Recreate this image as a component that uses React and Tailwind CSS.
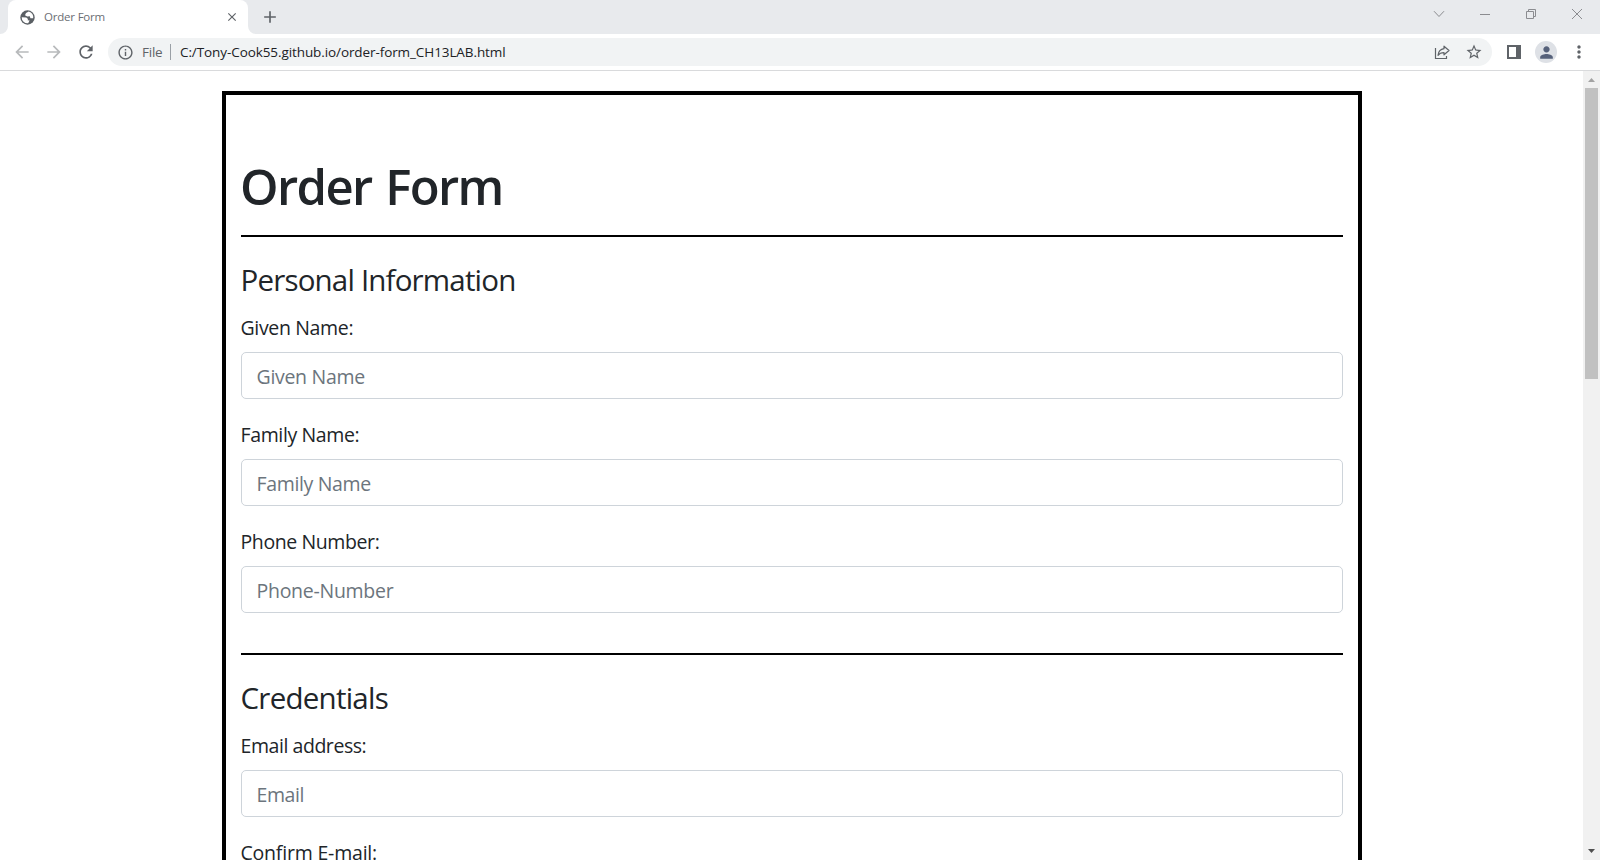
import {
  MdClose, MdAdd, MdArrowBack, MdArrowForward, MdRefresh,
  MdInfoOutline, MdStarBorder, MdPerson, MdMoreVert,
} from "react-icons/md";

function Globe() {
  return (
    <svg className="size-[17px]" viewBox="0 0 17 17">
      <circle cx="8.500" cy="8.500" r="7.200" fill="#5a5f64" />
      <path d="M9.800 2.600L7 4 6 6.200 8.300 7.400 10.800 7.200 11.400 9.200 14.200 9.300A5.800 5.800 0 0 0 9.800 2.600z" fill="#fff" />
      <path d="M2.700 8.200L7.300 8.500 9 10 8.600 11.300 10.600 11.400 9.200 14.200A5.800 5.800 0 0 1 2.700 8.200z" fill="#fff" />
    </svg>
  );
}

function TabStrip() {
  return (
    <div className="flex h-[34px] shrink-0 justify-between bg-[#e8eaed]">
      <div className="flex">
        <svg className="mt-[26px] h-2 w-2" viewBox="0 0 8 8">
          <path d="M8 0v8H0a8 8 0 0 0 8-8z" fill="#fff" />
        </svg>
        <div className="flex w-[240px] items-center rounded-t-lg bg-white pr-[9px] pl-[11px]">
          <Globe />
          <span className="ml-[8px] flex-1 text-[11.5px] tracking-[-0.2px] text-[#6b6e73]">Order Form</span>
          <MdClose className="size-[14px] text-[#5f6368]" />
        </div>
        <svg className="mt-[26px] h-2 w-2" viewBox="0 0 8 8">
          <path d="M0 0v8h8a8 8 0 0 1-8-8z" fill="#fff" />
        </svg>
        <MdAdd className="mt-[7px] ml-[4px] size-5 text-[#5f6368]" />
      </div>
      <svg className="h-[34px] w-[170px]" viewBox="1430 0 170 34" fill="none" stroke="#8b8c90">
        <path d="M1434 11.2l5 5.3 5-5.3" />
        <path d="M1480 14.5h10" />
        <path d="M1526.5 11.5h7v7h-7zM1528.5 11.5v-2h7v7h-2" />
        <path d="M1572 9l10 10M1582 9l-10 10" />
      </svg>
    </div>
  );
}

function Toolbar() {
  return (
    <div className="flex h-[37px] shrink-0 items-center border-b border-[#d9dadc] bg-white pl-3 text-[#5f6368]">
      <MdArrowBack className="size-5 text-[#b8babc]" />
      <MdArrowForward className="ml-3 size-5 text-[#b8babc]" />
      <MdRefresh className="ml-3 size-5" />
      <div className="ml-3 flex h-7 w-[1384px] items-center rounded-full bg-[#f1f3f4] pl-[9px] text-[13.5px]">
        <MdInfoOutline className="size-[17px]" />
        <span className="ml-[8px] w-[28px] tracking-[-0.25px]">File</span>
        <span className="h-4 w-px bg-[#9aa0a6]" />
        <span className="ml-[9px] flex-1 tracking-[-0.09px] text-[#202124]">
          C:/Tony-Cook55.github.io/order-form_CH13LAB.html
        </span>
        <svg className="size-4" viewBox="0 0 16 16" fill="none" stroke="#5f6368" strokeWidth="1.2">
          <path d="M1.500 4v10.500h11V12" />
          <path d="M10 2.200l5 4.300-5 4.300V8.600C7.300 8.600 5.400 9.300 4 11.300 4.400 7.800 6.400 5.200 10 4.700z" strokeLinejoin="round" />
        </svg>
        <MdStarBorder className="mr-[9px] ml-[15px] size-[18px]" />
      </div>
      <svg className="ml-[15px] size-[14px]" viewBox="0 0 14 14">
        <path d="M0 0h14v14H0zM2 2v10h7V2z" fill="#5f6368" fillRule="evenodd" />
      </svg>
      <div className="ml-[14px] flex size-[22px] items-center justify-center rounded-full bg-[#dee1e6]">
        <MdPerson className="size-[19px] text-[#56617a]" />
      </div>
      <MdMoreVert className="ml-[11.5px] size-5" />
    </div>
  );
}

function Field({ label, labelClass, placeholder, placeholderClass }) {
  return (
    <div className="mb-[21px]">
      <label className={`-ml-[0.5px] mb-[10px] block h-[29px] text-[19.5px] leading-[30px] text-[#212529] ${labelClass}`}>{label}</label>
      <input
        className={`block h-[47px] w-full rounded-[5px] border border-[#ced4da] pr-[14px] pl-[14.5px] pt-[2px] text-[19.5px] outline-none placeholder:text-[#6c757d] ${placeholderClass}`}
        placeholder={placeholder}
      />
    </div>
  );
}

function Scrollbar() {
  return (
    <div className="flex w-[17px] flex-col items-center bg-[#f1f1f1]">
      <svg className="h-[17px] w-[17px] shrink-0" viewBox="0 0 17 17">
        <path d="M5 11l3.500-4 3.500 4z" fill="#a3a3a3" />
      </svg>
      <div className="h-[291px] w-[13px] bg-[#c1c1c1]" />
      <svg className="mt-auto h-[17px] w-[17px] shrink-0" viewBox="0 0 17 17">
        <path d="M5 6l3.500 4 3.500-4z" fill="#505050" />
      </svg>
    </div>
  );
}

export default function App() {
  return (
    <div className="flex h-[860px] w-[1600px] flex-col overflow-hidden bg-white font-['Open_Sans',sans-serif]">
      <TabStrip />
      <Toolbar />
      <div className="flex min-h-0 flex-1">
        <main className="min-h-0 flex-1 overflow-hidden pt-5 pl-[222px]">
          <form className="h-[1200px] w-[1140px] border-4 border-black px-[15px] pt-[61px] text-[#212529]">
            <h1 className="-ml-px text-[49px] leading-[60px] font-semibold tracking-[-1.6px] [word-spacing:2.5px]">Order Form</h1>
            <hr className="mt-[19px] mb-[25px] border-t-2 border-black" />
            <h2 className="-ml-[0.5px] mb-[15px] text-[29.5px] leading-9 tracking-[-0.82px]">Personal Information</h2>
            <Field label="Given Name:" labelClass="tracking-[-0.34px]" placeholder="Given Name" placeholderClass="tracking-[-0.3px]" />
            <Field label="Family Name:" labelClass="tracking-[-0.37px]" placeholder="Family Name" placeholderClass="tracking-[-0.35px]" />
            <Field label="Phone Number:" labelClass="tracking-[-0.4px]" placeholder="Phone-Number" placeholderClass="tracking-[-0.27px]" />
            <hr className="mt-[40px] mb-[25px] border-t-2 border-black" />
            <h2 className="-ml-[0.5px] mb-[15px] text-[29.5px] leading-9 tracking-[-0.75px]">Credentials</h2>
            <Field label="Email address:" labelClass="tracking-[-0.44px]" placeholder="Email" placeholderClass="tracking-[-0.4px]" />
            <Field label="Confirm E-mail:" labelClass="tracking-[-0.2px]" placeholder="" placeholderClass="" />
          </form>
        </main>
        <Scrollbar />
      </div>
    </div>
  );
}
